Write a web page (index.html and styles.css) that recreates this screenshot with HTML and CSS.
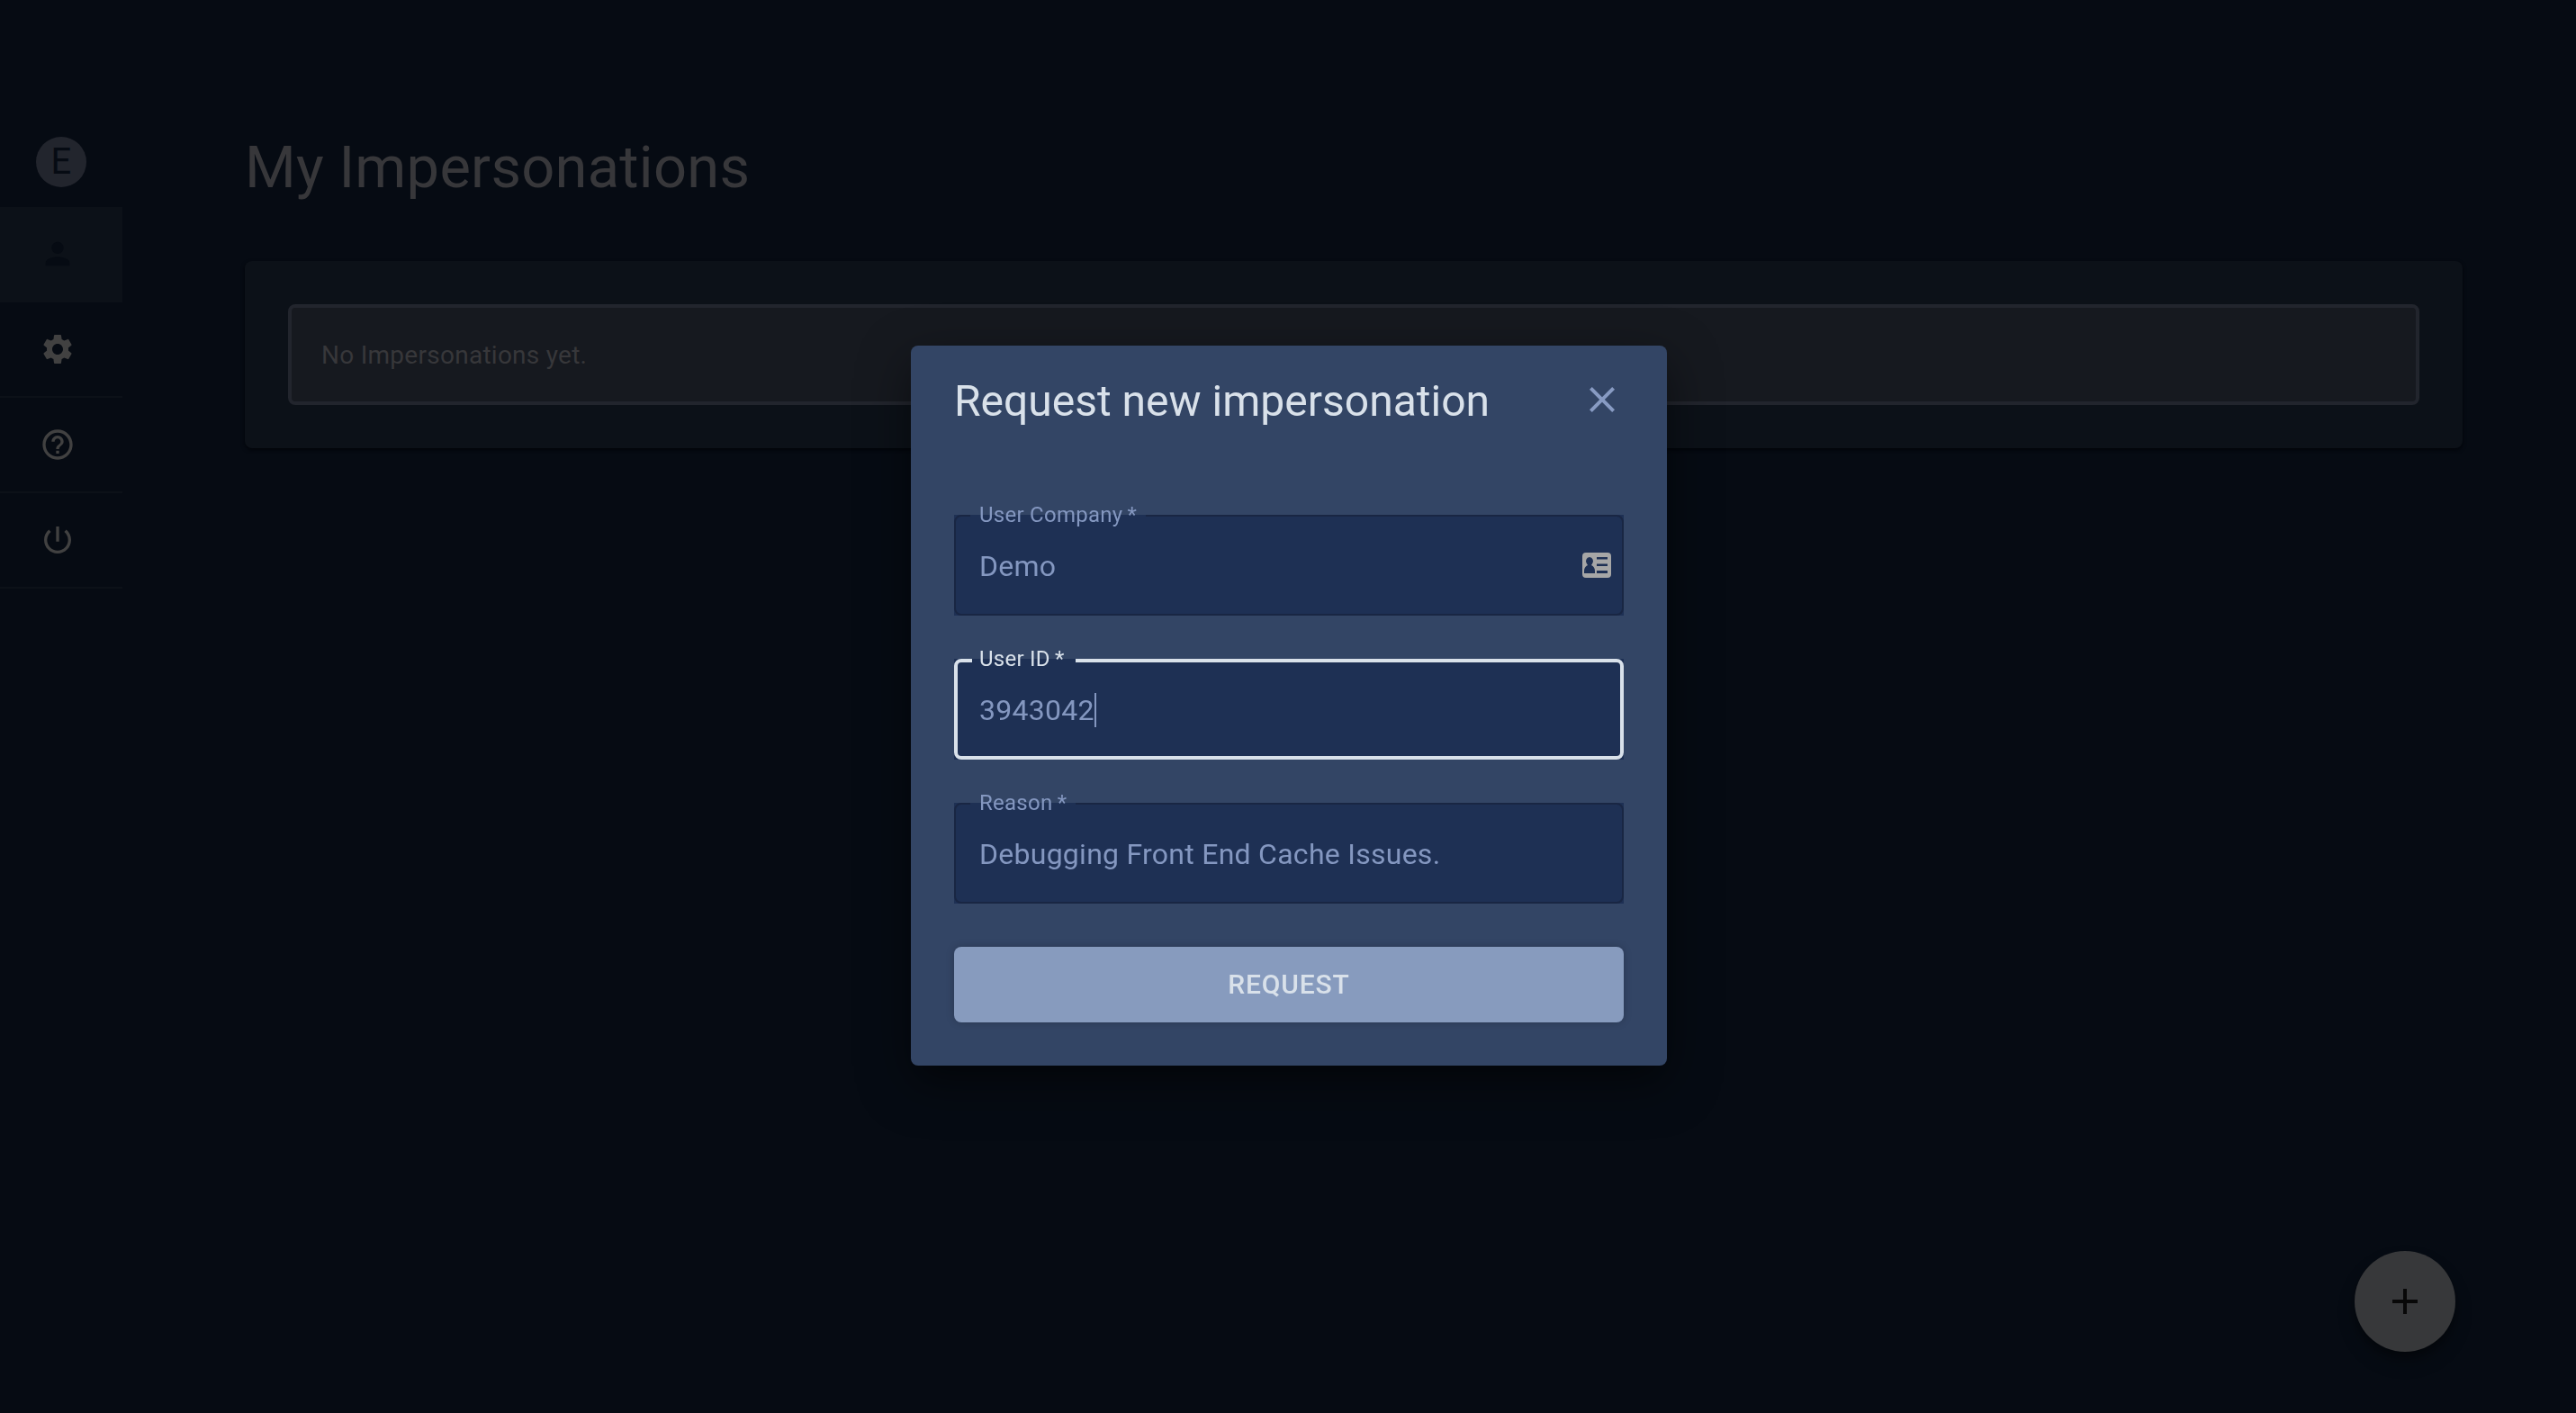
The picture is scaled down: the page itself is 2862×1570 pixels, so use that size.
FILE: index.html
```html
<!DOCTYPE html>
<html lang="en">
<head>
<meta charset="utf-8">
<meta name="viewport" content="width=device-width, initial-scale=1">
<title>My Impersonations</title>
<link rel="stylesheet" href="styles.css">
</head>
<body>
<div class="app">
  <nav class="sidebar" aria-label="Main">
    <div class="avatar">E</div>
    <a class="nav-item nav-item-active" href="#impersonations" aria-label="Impersonations">
      <svg class="nav-icon" viewBox="0 0 24 24"><path d="M12 12c2.21 0 4-1.79 4-4s-1.79-4-4-4-4 1.79-4 4 1.79 4 4 4zm0 2c-2.67 0-8 1.34-8 4v2h16v-2c0-2.66-5.33-4-8-4z"/></svg>
    </a>
    <a class="nav-item" href="#settings" aria-label="Settings">
      <svg class="nav-icon" viewBox="0 0 24 24"><path d="M19.14 12.94c.04-.3.06-.61.06-.94 0-.32-.02-.64-.07-.94l2.03-1.58c.18-.14.23-.41.12-.61l-1.92-3.32c-.12-.22-.37-.29-.59-.22l-2.39.96c-.5-.38-1.03-.7-1.62-.94l-.36-2.54c-.04-.24-.24-.41-.48-.41h-3.84c-.24 0-.43.17-.47.41l-.36 2.54c-.59.24-1.13.57-1.62.94l-2.39-.96c-.22-.08-.47 0-.59.22L2.74 8.87c-.12.21-.08.47.12.61l2.03 1.58c-.05.3-.09.63-.09.94s.02.64.07.94l-2.03 1.58c-.18.14-.23.41-.12.61l1.92 3.32c.12.22.37.29.59.22l2.39-.96c.5.38 1.03.7 1.62.94l.36 2.54c.05.24.24.41.48.41h3.84c.24 0 .44-.17.47-.41l.36-2.54c.59-.24 1.13-.56 1.62-.94l2.39.96c.22.08.47 0 .59-.22l1.92-3.32c.12-.22.07-.47-.12-.61l-2.01-1.58zM12 15.6c-1.98 0-3.6-1.62-3.6-3.6s1.62-3.6 3.6-3.6 3.6 1.62 3.6 3.6-1.62 3.6-3.6 3.6z"/></svg>
    </a>
    <a class="nav-item" href="#help" aria-label="Help">
      <svg class="nav-icon" viewBox="0 0 24 24"><path d="M11 18h2v-2h-2v2zm1-16C6.480 2 2 6.480 2 12s4.480 10 10 10 10-4.480 10-10S17.520 2 12 2zm0 18c-4.410 0-8-3.590-8-8s3.590-8 8-8 8 3.590 8 8-3.590 8-8 8zm0-14c-2.210 0-4 1.790-4 4h2c0-1.100.9-2 2-2s2 .9 2 2c0 2-3 1.750-3 5h2c0-2.250 3-2.500 3-5 0-2.210-1.790-4-4-4z"/></svg>
    </a>
    <a class="nav-item" href="#logout" aria-label="Log out">
      <svg class="nav-icon" viewBox="0 0 24 24"><path d="M13 3h-2v10h2V3zm4.830 2.170l-1.420 1.420C17.990 7.860 19 9.810 19 12c0 3.870-3.130 7-7 7s-7-3.130-7-7c0-2.190 1.010-4.140 2.580-5.420L6.170 5.170C4.230 6.820 3 9.260 3 12c0 4.970 4.030 9 9 9s9-4.030 9-9c0-2.740-1.230-5.180-3.170-6.830z"/></svg>
    </a>
  </nav>

  <main class="content">
    <h1 class="page-title">My Impersonations</h1>
    <section class="panel">
      <p class="notice">No Impersonations yet.</p>
    </section>
  </main>
</div>

<button class="fab" type="button" aria-label="New impersonation">
  <svg class="icon" viewBox="0 0 24 24"><path d="M19 13h-6v6h-2v-6H5v-2h6V5h2v6h6v2z"/></svg>
</button>

<div class="overlay">
  <div class="dialog" role="dialog" aria-modal="true" aria-labelledby="dialog-title">
    <header class="dialog-header">
      <h2 class="dialog-title" id="dialog-title">Request new impersonation</h2>
      <button class="close" type="button" aria-label="Close">
        <svg class="icon" viewBox="0 0 24 24"><path d="M19 6.410L17.590 5 12 10.590 6.410 5 5 6.410 10.590 12 5 17.590 6.410 19 12 13.410 17.590 19 19 17.590 13.410 12z"/></svg>
      </button>
    </header>
    <form class="form">
      <div class="field">
        <label class="label" for="company">User Company&#8201;*</label>
        <input class="input" id="company" type="text" value="Demo" required>
        <svg class="autofill" viewBox="0 0 32 28" aria-hidden="true"><path fill-rule="evenodd" d="M4 0h24a4 4 0 0 1 4 4v20a4 4 0 0 1-4 4H4a4 4 0 0 1-4-4V4a4 4 0 0 1 4-4zM8 5a4 4.500 0 0 0-3 7.500q1 1 1 1.500c-2.500 1-4 3.500-4 6.500V23h12v-2.500c0-3-1.500-5.500-4-6.500q0-.5 1-1.500A4 4.500 0 0 0 8 5zM16 5v2.500h12V5zM16 12.500v2.500h12v-2.500zM16 20v3h12v-3z"/></svg>
        <fieldset class="outline" aria-hidden="true"><legend class="notch">User Company&#8201;*</legend></fieldset>
      </div>
      <div class="field field-focused">
        <label class="label" for="user-id">User ID&#8201;*</label>
        <input class="input" id="user-id" type="text" value="3943042" required>
        <span class="caret" aria-hidden="true"></span>
        <fieldset class="outline" aria-hidden="true"><legend class="notch">User ID&#8201;*</legend></fieldset>
      </div>
      <div class="field">
        <label class="label" for="reason">Reason&#8201;*</label>
        <input class="input" id="reason" type="text" value="Debugging Front End Cache Issues." required>
        <fieldset class="outline" aria-hidden="true"><legend class="notch">Reason&#8201;*</legend></fieldset>
      </div>
      <button class="submit" type="submit">REQUEST</button>
    </form>
  </div>
</div>
</body>
</html>
```
FILE: styles.css
```css
* {
  box-sizing: border-box;
}

body {
  margin: 0;
  min-height: 100vh;
  background: #060b13;
  color: #37373a;
  font-family: Roboto, "Liberation Sans", sans-serif;
  font-size: 28px;
  letter-spacing: 0.00938em;
}

.app {
  display: flex;
  min-height: 100vh;
}

.sidebar {
  flex: none;
  width: 136px;
  padding-top: 152px;
}

.avatar {
  display: flex;
  align-items: center;
  justify-content: center;
  width: 56px;
  height: 56px;
  margin: 0 0 22px 40px;
  border-radius: 50%;
  background: #22252d;
  color: #060b13;
  font-size: 40px;
  line-height: 56px;
}

.nav-item {
  display: flex;
  align-items: center;
  height: 106px;
  padding-left: 44px;
  border-bottom: 2px solid #0c1118;
  color: #414141;
}

.nav-item-active {
  background: #0c1118;
  color: #060b13;
}

.nav-icon {
  width: 40px;
  height: 40px;
  fill: currentColor;
}

.content {
  flex: 1;
  padding: 144px 126px 48px 136px;
}

.page-title {
  margin: 0 0 62px;
  font-size: 65px;
  font-weight: 400;
  line-height: 84px;
}

.panel {
  padding: 48px;
  border-radius: 8px;
  background: #0c1118;
  box-shadow: 0 2px 4px #020409;
}

.notice {
  margin: 0;
  padding: 33px 33px 31px;
  border: 4px solid #22252d;
  border-radius: 8px;
  background: #16191f;
  line-height: 40px;
}

.icon {
  display: block;
  width: 48px;
  height: 48px;
  fill: currentColor;
}

.fab {
  position: fixed;
  right: 134px;
  bottom: 68px;
  display: flex;
  align-items: center;
  justify-content: center;
  width: 112px;
  height: 112px;
  padding: 0;
  border: 0;
  border-radius: 50%;
  background: #37383a;
  color: #080808;
  box-shadow: 0 6px 10px rgba(0, 0, 0, 0.3), 0 12px 20px rgba(0, 0, 0, 0.2);
}

.overlay {
  position: fixed;
  inset: 0;
  display: flex;
  align-items: center;
  justify-content: center;
  padding: 0 0 2px 2px;
}

.dialog {
  width: 840px;
  padding: 30px 48px 48px;
  border-radius: 8px;
  background: #334565;
  box-shadow: 0 22px 30px -14px rgba(0, 0, 0, 0.3), 0 18px 56px 4px rgba(0, 0, 0, 0.36);
}

.dialog-header {
  display: flex;
  align-items: center;
  justify-content: space-between;
  margin-bottom: 94px;
}

.dialog-title {
  margin: 0;
  color: #d9e1ea;
  font-size: 48px;
  font-weight: 400;
  line-height: 64px;
  letter-spacing: 0;
}

.close {
  margin-bottom: 4px;
  padding: 0;
  border: 0;
  background: none;
  color: #889bc3;
}

.form {
  display: grid;
  gap: 48px;
}

.field {
  position: relative;
  display: flex;
  height: 112px;
  background: #1e3054;
  color: #8497c0;
}

.label {
  position: absolute;
  top: -14px;
  left: 28px;
  z-index: 1;
  font-size: 24px;
  line-height: 28px;
}

.input {
  flex: 1;
  min-width: 0;
  padding: 2px 28px 0;
  border: 0;
  outline: 0;
  background: none;
  color: inherit;
  font: inherit;
  font-size: 32px;
  letter-spacing: inherit;
}

.autofill {
  position: absolute;
  top: 42px;
  right: 14px;
  width: 32px;
  height: 28px;
  fill: #a6a6a6;
}

.outline {
  position: absolute;
  inset: -10px 0 0;
  min-width: 0;
  margin: 0;
  padding: 0 16px;
  border: 2px solid #192643;
  border-radius: 8px;
  pointer-events: none;
}

.notch {
  height: 22px;
  padding: 0 10px;
  font-size: 24px;
  line-height: 22px;
  visibility: hidden;
}

.field-focused .label {
  color: #d9e1ea;
}

.field-focused .outline {
  top: -9px;
  border: 4px solid #d9e1ea;
}

.caret {
  position: absolute;
  top: 38px;
  left: 156px;
  width: 2px;
  height: 38px;
  background: #8497c0;
}

.submit {
  height: 84px;
  padding: 0 0 2px;
  border: 0;
  border-radius: 8px;
  background: #879bbe;
  color: #d9e1ea;
  font: inherit;
  font-size: 30px;
  font-weight: 500;
  letter-spacing: 0.02857em;
  box-shadow: 0 0 10px rgba(0, 0, 0, 0.2);
}
```
